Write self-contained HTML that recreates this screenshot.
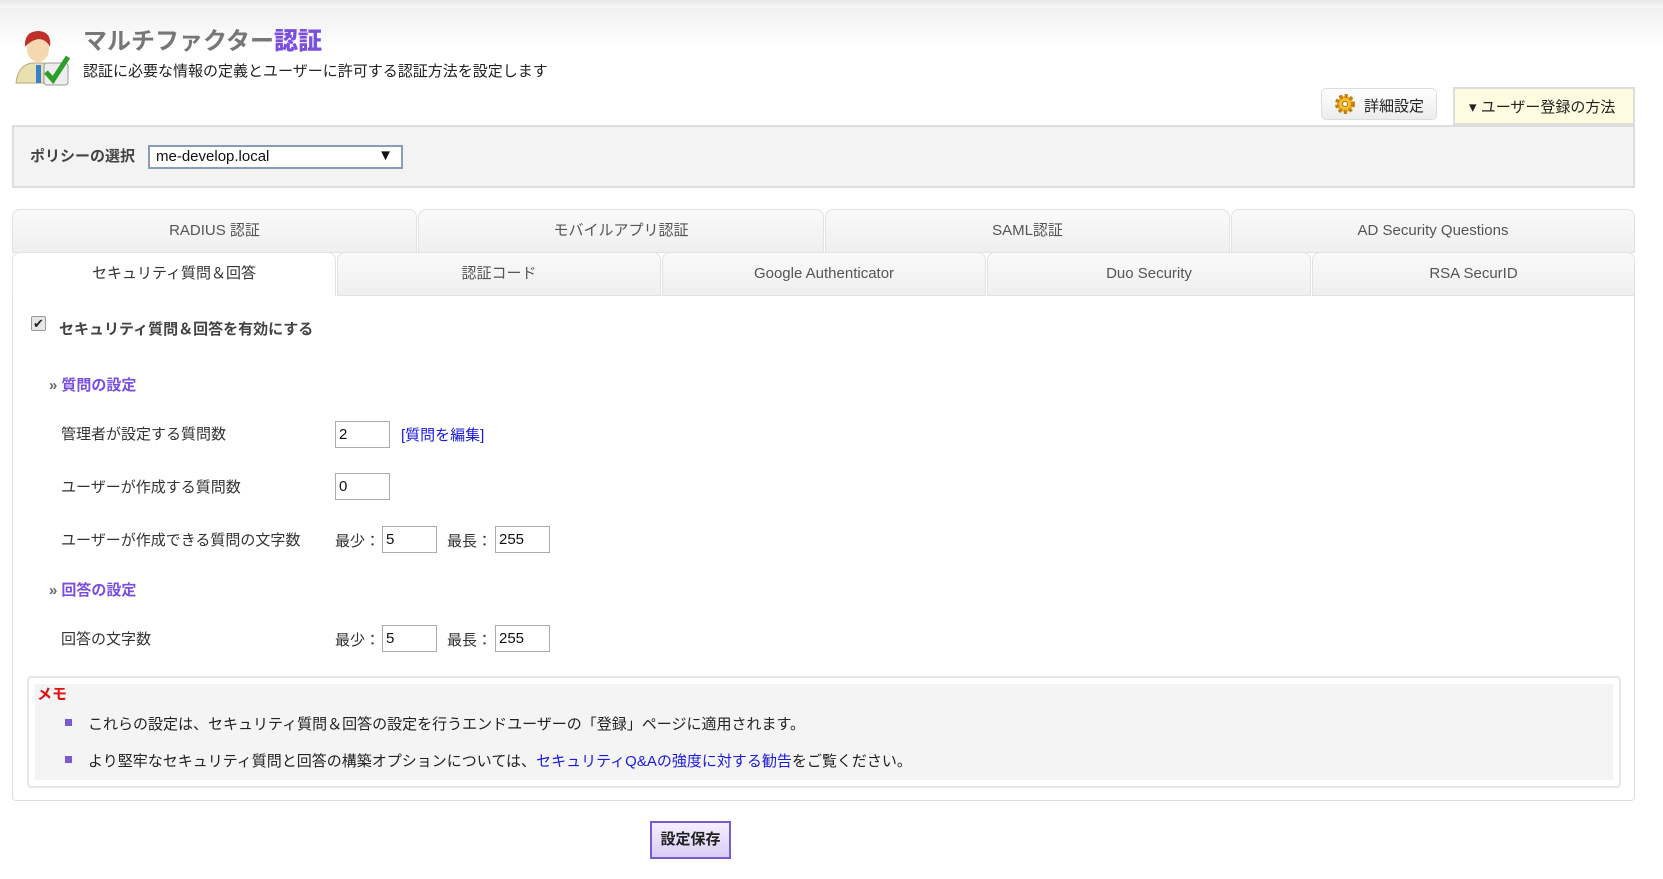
<!DOCTYPE html>
<html><head><meta charset="utf-8"><style>
*{box-sizing:border-box}
body{margin:0;width:1663px;height:879px;background:#fff;font-family:"Liberation Sans","Noto Sans CJK JP",sans-serif;font-size:15px;color:#333;position:relative;overflow:hidden}
.abs{position:absolute}
.topbar{left:0;top:0;width:1663px;height:8px;background:linear-gradient(#e8e8e8,#f6f6f6)}
.hdr{left:0;top:8px;width:1663px;height:40px;background:linear-gradient(#f0f0f0,#fff)}
.title{left:83px;top:21px;font-size:24px;font-weight:bold;color:#777}
.title b{color:#7a4fe0}
.sub{left:83px;top:60px;font-size:15px;color:#222}
.btn1{left:1321px;top:88px;width:116px;height:32px;border:1px solid #ddd;border-radius:5px;background:linear-gradient(#fff,#ececec);font-size:15px;padding:6px 0 0 42px;color:#222}
.btn2{left:1453px;top:87px;width:182px;height:38px;border:2px solid #ddd;background:#fefce0;font-size:15px;padding:7px 0 0 14px;color:#222}
.pol{left:12px;top:125px;width:1623px;height:63px;border:2px solid #ddd;background:#f3f3f3}
.tab{position:absolute;height:44px;border:1px solid #e2e2e2;border-radius:8px 8px 0 0;background:linear-gradient(#fafafa,#efefef);text-align:center;line-height:42px;font-size:15px;color:#555}
.panel{left:12px;top:296px;width:1623px;height:505px;border:1px solid #ddd;border-top:none;border-radius:0 0 4px 4px}
.lbl{position:absolute;font-size:15px;color:#333}
.inp{position:absolute;height:27px;border:1px solid #aaa;background:#fff;font-size:15px;padding:4px 3px;color:#111}
.sec{position:absolute;font-size:15px;font-weight:bold;color:#7a4fe0}
.sec span{color:#666;margin-right:4px}
.memo{left:27px;top:676px;width:1594px;height:112px;border:2px solid #e6e6e6;border-radius:4px;background:#fff}
.memo .in{position:absolute;left:6px;top:6px;right:6px;bottom:6px;background:#f4f4f4}
.bul{position:absolute;width:7px;height:7px;background:#7a5ad0}
.save{left:650px;top:821px;width:81px;height:38px;border:2px solid #7a5ad0;background:linear-gradient(#f4f0ff,#d8cdf5);font-weight:bold;font-size:15px;text-align:center;line-height:34px;color:#222}
</style></head><body>
<div class="abs topbar"></div>
<div class="abs hdr"></div>
<svg class="abs" style="left:12px;top:27px" width="60" height="62" viewBox="0 0 60 62">
<path d="M4 56 Q6 38 20 36 L32 36 Q44 40 44 56 Z" fill="#e8e0b0" stroke="#b8aa70"/>
<rect x="24" y="38" width="5" height="18" fill="#3a7fd0"/>
<ellipse cx="26" cy="22" rx="11" ry="13" fill="#f5d7b0"/>
<path d="M13 20 Q12 4 27 4 Q40 5 38 20 Q34 12 26 12 Q18 14 13 20Z" fill="#c0302a"/>
<rect x="32" y="36" width="24" height="22" rx="3" fill="#eee" stroke="#999"/>
<path d="M34 45 L41 53 L56 30" fill="none" stroke="#2aa02a" stroke-width="5"/>
</svg>
<div class="abs title">マルチファクター<b>認証</b></div>
<div class="abs sub">認証に必要な情報の定義とユーザーに許可する認証方法を設定します</div>
<div class="abs btn1">詳細設定</div>
<svg class="abs" style="left:1334px;top:93px" width="22" height="22" viewBox="0 0 22 22"><circle cx="11" cy="11" r="8" fill="#f0b020" stroke="#c08010" stroke-width="4" stroke-dasharray="3 2.3"/><circle cx="11" cy="11" r="5.5" fill="#f5c030"/><circle cx="11" cy="11" r="2.5" fill="#fff" stroke="#a07010"/></svg>
<div class="abs btn2">▾ ユーザー登録の方法</div>
<div class="abs pol">
 <div class="lbl" style="left:16px;top:18px;font-weight:bold;color:#444">ポリシーの選択</div>
 <div class="inp" style="left:134px;top:18px;width:255px;height:24px;border:2px solid #8a9db5;padding:1px 6px">me-develop.local<span style="position:absolute;right:8px;top:0">▼</span></div>
</div>
<div class="tab" style="left:12px;top:209px;width:405px">RADIUS 認証</div>
<div class="tab" style="left:418px;top:209px;width:406px">モバイルアプリ認証</div>
<div class="tab" style="left:825px;top:209px;width:405px">SAML認証</div>
<div class="tab" style="left:1231px;top:209px;width:404px">AD Security Questions</div>
<div class="tab" style="left:12px;top:252px;width:324px;background:#fff;border-bottom:none;color:#333">セキュリティ質問＆回答</div>
<div class="tab" style="left:337px;top:252px;width:324px">認証コード</div>
<div class="tab" style="left:662px;top:252px;width:324px">Google Authenticator</div>
<div class="tab" style="left:987px;top:252px;width:324px">Duo Security</div>
<div class="tab" style="left:1312px;top:252px;width:323px">RSA SecurID</div>
<div class="abs panel"></div>
<div class="abs" style="left:31px;top:316px;width:15px;height:15px;border:1px solid #999;border-radius:2px;background:#e8e8e8;font-size:13px;line-height:13px;text-align:center;color:#222">✔</div>
<div class="lbl" style="left:59px;top:318px;font-weight:bold;color:#444">セキュリティ質問＆回答を有効にする</div>
<div class="sec" style="left:49px;top:374px"><span>»</span>質問の設定</div>
<div class="lbl" style="left:61px;top:423px">管理者が設定する質問数</div>
<div class="inp" style="left:335px;top:421px;width:55px">2</div>
<div class="lbl" style="left:401px;top:424px;color:#1a1adc">[質問を編集]</div>
<div class="lbl" style="left:61px;top:476px">ユーザーが作成する質問数</div>
<div class="inp" style="left:335px;top:473px;width:55px">0</div>
<div class="lbl" style="left:61px;top:529px">ユーザーが作成できる質問の文字数</div>
<div class="lbl" style="left:335px;top:530px">最少：</div>
<div class="inp" style="left:382px;top:526px;width:55px">5</div>
<div class="lbl" style="left:447px;top:530px">最長：</div>
<div class="inp" style="left:495px;top:526px;width:55px">255</div>
<div class="sec" style="left:49px;top:579px"><span>»</span>回答の設定</div>
<div class="lbl" style="left:61px;top:628px">回答の文字数</div>
<div class="lbl" style="left:335px;top:629px">最少：</div>
<div class="inp" style="left:382px;top:625px;width:55px">5</div>
<div class="lbl" style="left:447px;top:629px">最長：</div>
<div class="inp" style="left:495px;top:625px;width:55px">255</div>
<div class="abs memo"><div class="in"></div></div>
<div class="lbl" style="left:37px;top:683px;color:#e01010;font-weight:bold">メモ</div>
<div class="bul" style="left:65px;top:719px"></div>
<div class="lbl" style="left:88px;top:713px;color:#222">これらの設定は、セキュリティ質問＆回答の設定を行うエンドユーザーの「登録」ページに適用されます。</div>
<div class="bul" style="left:65px;top:756px"></div>
<div class="lbl" style="left:88px;top:750px;color:#222">より堅牢なセキュリティ質問と回答の構築オプションについては、<span style="color:#1a1adc">セキュリティQ&amp;Aの強度に対する勧告</span>をご覧ください。</div>
<div class="abs save">設定保存</div>
</body></html>
